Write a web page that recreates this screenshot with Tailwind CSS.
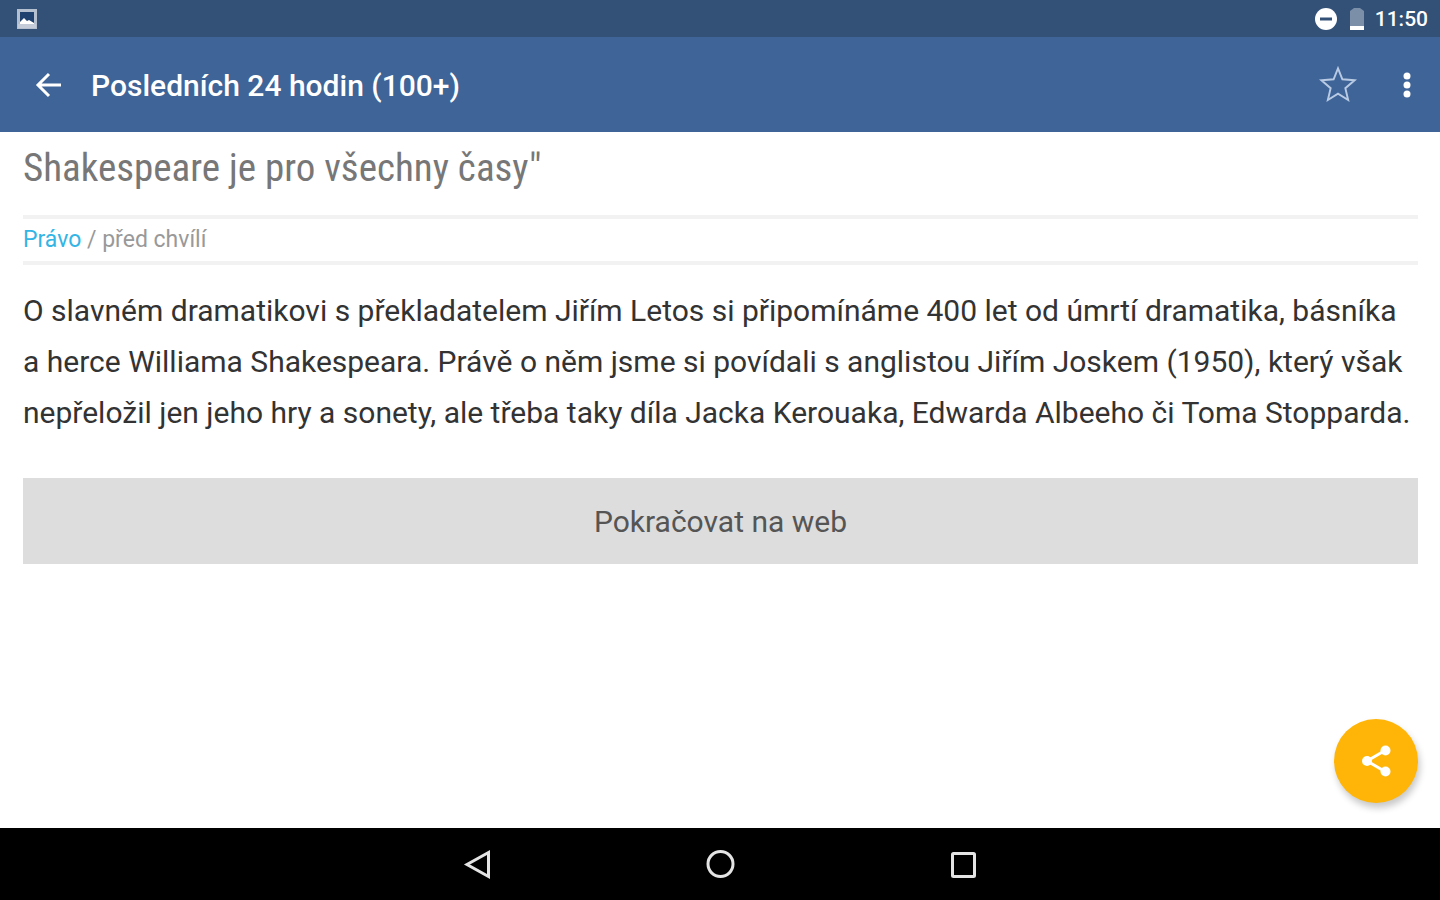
<!DOCTYPE html>
<html lang="cs">
<head>
<meta charset="utf-8">
<meta name="viewport" content="width=device-width, initial-scale=1">
<title>Posledních 24 hodin</title>
<script src="https://cdn.jsdelivr.net/npm/@tailwindcss/browser@4"></script>
</head>
<body class="flex min-h-screen flex-col bg-white font-['Roboto',sans-serif]">
  <div class="flex h-[37px] shrink-0 items-center justify-between bg-[#335077] pr-3 pl-[17px] text-white">
    <svg class="size-5" viewBox="0 0 20 20" aria-hidden="true">
      <rect x="1.5" y="1.5" width="17" height="17" fill="#1f416f" stroke="#b4c0d0" stroke-width="3"/>
      <path d="M3 13l4-4 3 3 2-1 5 3v3H3z" fill="#fff"/>
      <path d="M1 15h18v4H1z" fill="#c3ccd8"/>
    </svg>
    <div class="flex items-center">
      <svg class="mr-[13px] size-[22px]" viewBox="0 0 22 22" aria-hidden="true">
        <circle cx="11" cy="11" r="11" fill="#fff"/>
        <path d="M5 11h12" stroke="#335077" stroke-width="3"/>
      </svg>
      <svg class="mr-[11px] h-[22px] w-[14px]" viewBox="0 0 14 22" aria-hidden="true">
        <path d="M0 3l4-3h6l4 3v19H0z" fill="#7b8fa9"/>
        <path d="M0 18h14v4H0z" fill="#fff"/>
      </svg>
      <span class="text-[21px] leading-6 font-medium">11:50</span>
    </div>
  </div>

  <header class="flex h-[95px] shrink-0 items-center bg-[#3f6497] pr-[18px] pl-8 text-white">
    <button type="button" aria-label="Zpět" class="mr-[27px]">
      <svg class="block h-8 w-8" viewBox="0 0 32 32" fill="none" stroke="#fff" stroke-width="3"><path d="M29 16H7M17 5L6 16l11 11"/></svg>
    </button>
    <h1 class="flex-1 pt-0.5 text-[30px] leading-10 font-medium">Posledních 24 hodin (100+)</h1>
    <button type="button" aria-label="Přidat k oblíbeným" class="mr-[33px]">
      <svg class="block size-[42px]" viewBox="0 0 24 24" fill="none" stroke="#b9cbe4" stroke-width="1.1"><path d="M21.500 9.240l-7-.5L12 2.500 9.500 8.740l-7 .5 5.300 4.600L6.200 20.600 12 17l5.800 3.600-1.600-6.760z"/></svg>
    </button>
    <button type="button" aria-label="Další možnosti">
      <svg class="block h-8 w-[30px]" viewBox="0 0 30 32" fill="#fff"><circle cx="15" cy="7" r="3.5"/><circle cx="15" cy="16" r="3.5"/><circle cx="15" cy="25" r="3.5"/></svg>
    </button>
  </header>

  <main class="relative flex-1 pt-[13px] pr-[22px] pl-[23px]">
    <h2 class="mb-6 font-['Roboto_Condensed','Roboto',sans-serif] text-[39px] leading-[46px] font-normal text-[#777]">Shakespeare je pro všechny časy"</h2>
    <p class="border-y-4 border-[#f2f2f2] py-1 text-[23px] leading-[34px] text-[#999]"><a href="#" class="text-[#33b5e5]">Právo</a> / před chvílí</p>
    <p class="mt-5 text-[30px] leading-[51px] text-[#333]">O slavném dramatikovi s překladatelem Jiřím Letos si připomínáme 400 let od úmrtí dramatika, básníka a herce Williama Shakespeara. Právě o něm jsme si povídali s anglistou Jiřím Joskem (1950), který však nepřeložil jen jeho hry a sonety, ale třeba taky díla Jacka Kerouaka, Edwarda Albeeho či Toma Stopparda.</p>
    <button type="button" class="mt-10 h-[86px] w-full bg-[#ddd] text-[30px] text-[#555]">Pokračovat na web</button>
    <button type="button" aria-label="Sdílet" class="absolute right-[22px] bottom-[25px] flex size-[84px] items-center justify-center rounded-full bg-[#ffb507] shadow-[2px_5px_7px_rgba(0,0,0,0.22)]">
      <svg class="size-8" viewBox="0 0 32 32" fill="#fff"><path d="M25 5.500L7 16l18 10.500" fill="none" stroke="#fff" stroke-width="3"/><circle cx="25.500" cy="5.500" r="5"/><circle cx="7" cy="16" r="5"/><circle cx="25.500" cy="26.500" r="5"/></svg>
    </button>
  </main>

  <nav class="flex h-[72px] shrink-0 items-center justify-center gap-[211px] bg-black" aria-label="Systémová navigace">
    <button type="button" aria-label="Zpět"><svg class="block size-8" viewBox="0 0 32 32" fill="none" stroke="#e4e4e4" stroke-width="3"><path d="M27.500 4.500v24L6 16.500z"/></svg></button>
    <button type="button" aria-label="Domů"><svg class="block size-8" viewBox="0 0 32 32" fill="none" stroke="#e4e4e4" stroke-width="3"><circle cx="16.500" cy="16" r="12.500"/></svg></button>
    <button type="button" aria-label="Přehled"><svg class="block size-8" viewBox="0 0 32 32" fill="none" stroke="#e4e4e4" stroke-width="3"><rect x="5.500" y="5.500" width="22" height="23" rx="1"/></svg></button>
  </nav>
</body>
</html>
